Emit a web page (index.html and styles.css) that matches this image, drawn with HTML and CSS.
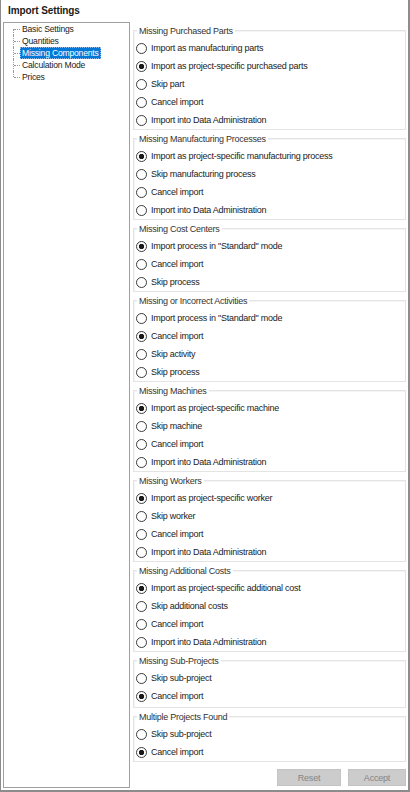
FILE: index.html
```html
<!DOCTYPE html>
<html>
<head>
<meta charset="utf-8">
<title>Import Settings</title>
<link rel="stylesheet" href="styles.css">
</head>
<body>
<div class="window">
  <div class="header">Import Settings</div>
  <div class="body">
    <div class="tree">
      <ul class="tree-list">
        <li class="tree-item first"><span class="label">Basic Settings</span></li>
        <li class="tree-item"><span class="label">Quantities</span></li>
        <li class="tree-item"><span class="label selected">Missing Components</span></li>
        <li class="tree-item"><span class="label">Calculation Mode</span></li>
        <li class="tree-item last"><span class="label">Prices</span></li>
      </ul>
    </div>
    <div class="main">
      <div class="group">
        <div class="group-title">Missing Purchased Parts</div>
        <div class="option"><span class="radio"></span>Import as manufacturing parts</div>
        <div class="option"><span class="radio checked"></span>Import as project-specific purchased parts</div>
        <div class="option"><span class="radio"></span>Skip part</div>
        <div class="option"><span class="radio"></span>Cancel import</div>
        <div class="option"><span class="radio"></span>Import into Data Administration</div>
      </div>
      <div class="group">
        <div class="group-title">Missing Manufacturing Processes</div>
        <div class="option"><span class="radio checked"></span>Import as project-specific manufacturing process</div>
        <div class="option"><span class="radio"></span>Skip manufacturing process</div>
        <div class="option"><span class="radio"></span>Cancel import</div>
        <div class="option"><span class="radio"></span>Import into Data Administration</div>
      </div>
      <div class="group">
        <div class="group-title">Missing Cost Centers</div>
        <div class="option"><span class="radio checked"></span>Import process in "Standard" mode</div>
        <div class="option"><span class="radio"></span>Cancel import</div>
        <div class="option"><span class="radio"></span>Skip process</div>
      </div>
      <div class="group">
        <div class="group-title">Missing or Incorrect Activities</div>
        <div class="option"><span class="radio"></span>Import process in "Standard" mode</div>
        <div class="option"><span class="radio checked"></span>Cancel import</div>
        <div class="option"><span class="radio"></span>Skip activity</div>
        <div class="option"><span class="radio"></span>Skip process</div>
      </div>
      <div class="group">
        <div class="group-title">Missing Machines</div>
        <div class="option"><span class="radio checked"></span>Import as project-specific machine</div>
        <div class="option"><span class="radio"></span>Skip machine</div>
        <div class="option"><span class="radio"></span>Cancel import</div>
        <div class="option"><span class="radio"></span>Import into Data Administration</div>
      </div>
      <div class="group">
        <div class="group-title">Missing Workers</div>
        <div class="option"><span class="radio checked"></span>Import as project-specific worker</div>
        <div class="option"><span class="radio"></span>Skip worker</div>
        <div class="option"><span class="radio"></span>Cancel import</div>
        <div class="option"><span class="radio"></span>Import into Data Administration</div>
      </div>
      <div class="group">
        <div class="group-title">Missing Additional Costs</div>
        <div class="option"><span class="radio checked"></span>Import as project-specific additional cost</div>
        <div class="option"><span class="radio"></span>Skip additional costs</div>
        <div class="option"><span class="radio"></span>Cancel import</div>
        <div class="option"><span class="radio"></span>Import into Data Administration</div>
      </div>
      <div class="group group-short">
        <div class="group-title">Missing Sub-Projects</div>
        <div class="option"><span class="radio"></span>Skip sub-project</div>
        <div class="option"><span class="radio checked"></span>Cancel import</div>
      </div>
      <div class="group">
        <div class="group-title">Multiple Projects Found</div>
        <div class="option"><span class="radio"></span>Skip sub-project</div>
        <div class="option"><span class="radio checked"></span>Cancel import</div>
      </div>
      <div class="actions">
        <button class="btn btn-reset" disabled>Reset</button>
        <button class="btn btn-accept" disabled>Accept</button>
      </div>
    </div>
  </div>
</div>
</body>
</html>
```
FILE: styles.css
```css
html, body {
  margin: 0;
  padding: 0;
  background: #ffffff;
}

body {
  font-family: "Liberation Sans", Arial, sans-serif;
  font-size: 9px;
  letter-spacing: -0.25px;
  color: #222222;
}

.window {
  width: 410px;
  height: 792px;
  box-sizing: border-box;
  border-left: 1px solid #8c8c8c;
  border-right: 2px solid #8c8c8c;
  border-bottom: 2px solid #8c8c8c;
  display: flex;
  flex-direction: column;
  background: #ffffff;
}

.header {
  height: 22px;
  flex: 0 0 22px;
  box-sizing: border-box;
  padding-left: 7px;
  line-height: 21px;
  font-size: 10px;
  font-weight: bold;
  letter-spacing: -0.1px;
  color: #1a1a1a;
}

.body {
  flex: 1;
  display: flex;
  padding: 0 2px 2px 2px;
  min-height: 0;
}

/* Tree */
.tree {
  width: 127px;
  box-sizing: border-box;
  border: 1px solid #a0a0a0;
  flex: 0 0 127px;
}

.tree-list {
  list-style: none;
  margin: 0;
  padding: 0;
}

.tree-item {
  position: relative;
  height: 12px;
  line-height: 12px;
  padding-left: 16px;
  font-size: 8.6px;
  letter-spacing: -0.2px;
}

.tree-item::before {
  content: "";
  position: absolute;
  left: 9px;
  top: 0;
  bottom: 0;
  border-left: 1px dotted #9a9a9a;
}

.tree-item.first::before {
  top: 6px;
}

.tree-item.last::before {
  bottom: 6px;
}

.tree-item::after {
  content: "";
  position: absolute;
  left: 10px;
  top: 6px;
  width: 6px;
  border-top: 1px dotted #9a9a9a;
}

.label {
  display: inline-block;
  padding: 0 2px;
  height: 12px;
}

.label.selected {
  background: #0078d7;
  color: #ffffff;
  outline: 1px dotted #8fb8e6;
  outline-offset: -1px;
}

/* Main area */
.main {
  flex: 1;
  margin-left: 3px;
  padding-top: 8px;
  display: flex;
  flex-direction: column;
}

.group {
  border: 1px solid #e4e4e4;
  box-shadow: inset 1px 1px 0 #f4f4f4;
  padding: 0 0 0 2px;
  margin-bottom: 8px;
}

.group-short {
  padding-bottom: 2px;
}

.group-title {
  width: max-content;
  margin: -6px 0 2px 1px;
  padding: 0 2px;
  height: 12px;
  line-height: 12px;
  background: #ffffff;
  color: #333333;
}

.option {
  height: 18px;
  display: flex;
  align-items: center;
  gap: 4px;
  white-space: nowrap;
}

.radio {
  width: 11px;
  height: 11px;
  box-sizing: border-box;
  border: 1px solid #3a3a3a;
  border-radius: 50%;
  background: #ffffff;
  flex: 0 0 11px;
}

.radio.checked {
  background: radial-gradient(circle, #1a1a1a 0, #1a1a1a 2.4px, #ffffff 3px);
}

.actions {
  display: flex;
  justify-content: flex-end;
  gap: 7px;
  margin-top: -1px;
}

.btn {
  height: 17px;
  box-sizing: border-box;
  border: 1px solid #c4c4c4;
  background: #cccccc;
  color: #858585;
  font-family: inherit;
  font-size: 9px;
  letter-spacing: -0.2px;
  padding: 0;
  margin: 0;
}

.btn-reset {
  width: 64px;
}

.btn-accept {
  width: 58px;
}
```
